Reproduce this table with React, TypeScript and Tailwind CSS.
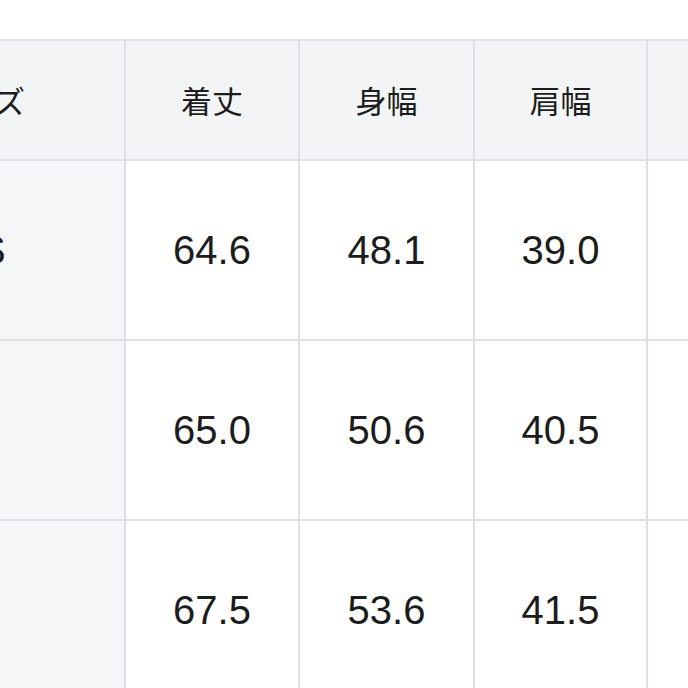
const headers = ["サイズ", "着丈", "身幅", "肩幅", "袖丈"];

const rows = [
  ["XS", "64.6", "48.1", "39.0", "60.5"],
  ["S", "65.0", "50.6", "40.5", "61.0"],
  ["M", "67.5", "53.6", "41.5", "62.0"],
];

export default function App() {
  return (
    <div
      className="w-[688px] h-[688px] overflow-hidden bg-white pt-[39px] text-[#1c1c1c]"
      style={{ fontFamily: '"Liberation Sans", "Noto Sans CJK JP", sans-serif' }}
    >
      <table className="-ml-[168px] table-fixed border-collapse w-[990px]">
        <colgroup>
          <col className="w-[292px]" />
          <col className="w-[174px]" />
          <col className="w-[175px]" />
          <col className="w-[173px]" />
          <col className="w-[176px]" />
        </colgroup>
        <thead>
          <tr className="h-[120px]">
            {headers.map((h) => (
              <th
                key={h}
                className="border-2 border-[#dde0e4] bg-[#f3f4f6] text-center align-middle text-[31px] font-normal"
                style={{ fontFamily: '"Noto Sans CJK JP", sans-serif' }}
              >
                {h}
              </th>
            ))}
          </tr>
        </thead>
        <tbody>
          {rows.map((r) => (
            <tr key={r[0]} className="h-[180px]">
              {r.map((c, i) => (
                <td
                  key={i}
                  className={
                    i === 0
                      ? "border-2 border-[#dde0e4] bg-[#f5f6f7] text-center align-middle text-[40px]"
                      : "border-2 border-[#dde0e4] bg-white text-center align-middle text-[40px]"
                  }
                >
                  {c}
                </td>
              ))}
            </tr>
          ))}
        </tbody>
      </table>
    </div>
  );
}
